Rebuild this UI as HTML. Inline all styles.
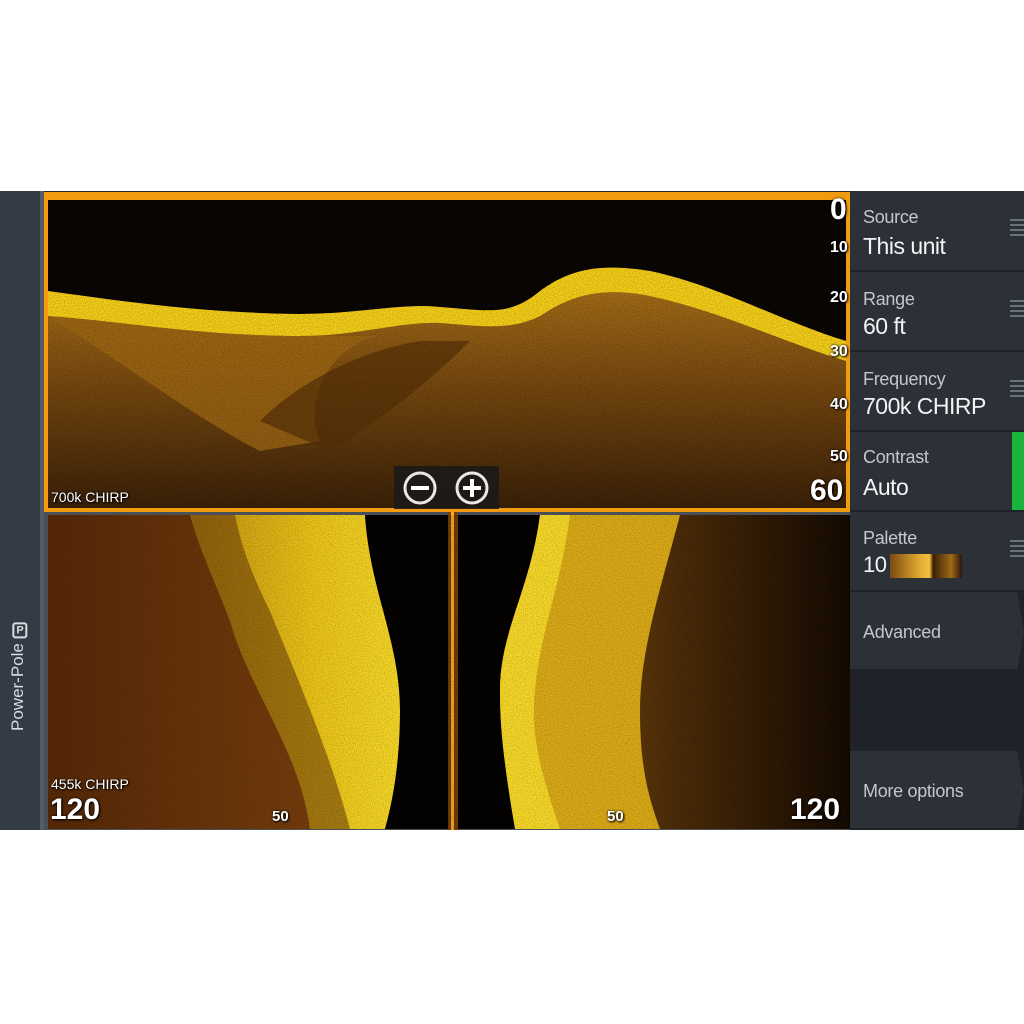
<!DOCTYPE html>
<html><head><meta charset="utf-8"><style>
html,body{margin:0;padding:0;background:#fff;width:1024px;height:1024px;overflow:hidden;font-family:"Liberation Sans","DejaVu Sans",sans-serif}
.scr{position:absolute;left:0;top:191px;width:1024px;height:639px;background:#23272d}
.lb{position:absolute;left:0;top:0;width:40px;height:639px;background:#333b44;border-right:4px solid #525c66}
.pp{position:absolute;left:8px;top:540px;transform:rotate(-90deg);transform-origin:0 0;color:#d8dde2;font-size:17px;white-space:nowrap}
.menu{position:absolute;left:850px;top:0;width:174px;height:639px;background:#1f2329}
.it{position:absolute;left:0;width:174px;background:#2c3138;border-bottom:2px solid #1f2329;box-sizing:border-box}
.l1{position:absolute;left:13px;color:#c2c7cc;font-size:18px;letter-spacing:-0.3px}
.l2{position:absolute;left:13px;color:#f2f4f6;font-size:23px;letter-spacing:-0.5px}
.hb{position:absolute;right:0;width:14px;height:18px;background:repeating-linear-gradient(#6a727b 0 2px,transparent 2px 5px)}
.t{position:absolute;color:#fff;font-weight:bold;text-shadow:0 0 2px #000,1px 1px 2px #000}
</style></head><body>
<div class="scr">
<svg width="1024" height="639" style="position:absolute;left:0;top:0">
<defs>
<filter id="n" x="0" y="0" width="100%" height="100%"><feTurbulence type="fractalNoise" baseFrequency="0.9" numOctaves="2" seed="3"/><feColorMatrix values="0 0 0 0 0  0 0 0 0 0  0 0 0 0 0  0 0 0 -1.4 1"/></filter>
<linearGradient id="bt" x1="0" y1="0" x2="0" y2="1"><stop offset="0" stop-color="#b57a1a"/><stop offset="0.5" stop-color="#7a4a10"/><stop offset="1" stop-color="#3d2208"/></linearGradient>
<linearGradient id="bl" x1="0" y1="0" x2="1" y2="0"><stop offset="0" stop-color="#5a2a08"/><stop offset="1" stop-color="#8a4a10"/></linearGradient>
<linearGradient id="yb" x1="0" y1="0" x2="1" y2="0"><stop offset="0" stop-color="#c99712"/><stop offset="0.6" stop-color="#f4cc1a"/><stop offset="1" stop-color="#ffe02a"/></linearGradient>
<linearGradient id="br" x1="0" y1="0" x2="1" y2="0"><stop offset="0" stop-color="#9a6212"/><stop offset="0.6" stop-color="#4a2a08"/><stop offset="1" stop-color="#150a02"/></linearGradient>
</defs>
<rect x="44" y="1" width="806" height="319" fill="#f29a10"/>
<rect x="48" y="9" width="798" height="308" fill="#0a0603"/>
<path d="M48 100 C120 110 200 122 300 123 C360 123 400 112 440 116 C490 120 510 125 540 100 C570 78 600 72 650 80 C720 95 780 130 846 150 L846 317 L48 317 Z" fill="url(#bt)"/>
<path d="M48 100 C120 110 200 122 300 123 C360 123 400 112 440 116 C490 120 510 125 540 100 C570 78 600 72 650 80 C720 95 780 130 846 150 L846 170 C780 150 720 120 650 105 C600 95 570 105 540 125 C510 140 480 135 440 132 C400 130 360 145 300 145 C200 145 120 130 48 125 Z" fill="#ffd81a"/>
<path d="M48 125 C120 170 200 230 260 260 L320 250 C300 200 340 150 380 145 L300 145 C200 145 120 130 48 125Z" fill="#a56c14" opacity="0.8"/>
<path d="M260 230 C300 190 360 160 420 150 L470 150 C430 190 380 230 330 260Z" fill="#5a3208" opacity="0.7"/>
<rect x="48" y="9" width="798" height="308" filter="url(#n)" opacity="0.35"/>
<rect x="44" y="320" width="404" height="319" fill="#4a5058"/>
<rect x="48" y="324" width="400" height="314" fill="url(#bl)"/>
<path d="M190 324 L365 324 C370 400 400 450 400 520 C400 580 390 620 385 638 L310 638 C300 560 250 500 230 430 C215 390 200 360 190 324Z" fill="url(#yb)"/>
<path d="M190 324 C200 360 215 390 230 430 C250 500 300 560 310 638 L350 638 C330 560 290 470 270 420 C250 380 240 350 235 324Z" fill="#6a3a0a" opacity="0.55"/>
<path d="M365 324 L448 324 L448 638 L385 638 C390 620 400 580 400 520 C400 450 370 400 365 324Z" fill="#050302"/>
<rect x="448" y="320" width="10" height="319" fill="#7a3a0a"/>
<rect x="451" y="320" width="3" height="319" fill="#f0b020"/>
<rect x="458" y="320" width="392" height="319" fill="#4a5058"/>
<rect x="458" y="324" width="392" height="314" fill="url(#br)"/>
<path d="M458 324 L540 324 C530 400 500 440 500 500 C500 560 510 600 520 638 L458 638Z" fill="#050302"/>
<path d="M540 324 L680 324 C660 400 640 460 640 520 C640 580 650 610 660 638 L520 638 C510 600 500 560 500 500 C500 440 530 400 540 324Z" fill="#e2b018"/>
<path d="M540 324 C530 400 500 440 500 500 C500 540 505 580 515 638 L560 638 C540 580 530 540 535 500 C540 440 560 400 570 324Z" fill="#ffe02a"/>
<rect x="48" y="324" width="802" height="314" filter="url(#n)" opacity="0.3"/>
<rect x="394" y="275" width="105" height="44" fill="#1c1a18" opacity="0.9"/>
<circle cx="420" cy="297" r="15" fill="none" stroke="#e8e8e8" stroke-width="3"/>
<rect x="411" y="295" width="18" height="4" fill="#fff"/>
<circle cx="472" cy="297" r="15" fill="none" stroke="#e8e8e8" stroke-width="3"/>
<rect x="463" y="295" width="18" height="4" fill="#fff"/><rect x="470" y="288" width="4" height="18" fill="#fff"/>
<rect x="44" y="318" width="806" height="3" fill="#f29a10"/>
</svg>
<div class="t" style="left:830px;top:2px;font-size:30px">0</div>
<div class="t" style="left:830px;top:48px;font-size:16px">10</div>
<div class="t" style="left:830px;top:98px;font-size:16px">20</div>
<div class="t" style="left:830px;top:152px;font-size:16px">30</div>
<div class="t" style="left:830px;top:205px;font-size:16px">40</div>
<div class="t" style="left:830px;top:257px;font-size:16px">50</div>
<div class="t" style="left:810px;top:283px;font-size:30px">60</div>
<div class="t" style="left:51px;top:298px;font-size:14px;font-weight:normal">700k CHIRP</div>
<div class="t" style="left:51px;top:585px;font-size:14px;font-weight:normal">455k CHIRP</div>
<div class="t" style="left:50px;top:602px;font-size:30px">120</div>
<div class="t" style="left:272px;top:617px;font-size:15px">50</div>
<div class="t" style="left:607px;top:617px;font-size:15px">50</div>
<div class="t" style="left:790px;top:602px;font-size:30px">120</div>
<div class="lb"><div class="pp">Power-Pole <span style="display:inline-block;border:2px solid #d8dde2;border-radius:3px;font-size:11px;font-weight:bold;padding:0 2px;transform:rotate(90deg)">P</span></div></div>
<div class="menu">
<div class="it" style="top:0;height:81px"><div class="l1" style="top:16px">Source</div><div class="l2" style="top:42px">This unit</div><div class="hb" style="top:28px"></div></div>
<div class="it" style="top:81px;height:80px"><div class="l1" style="top:17px">Range</div><div class="l2" style="top:41px">60 ft</div><div class="hb" style="top:28px"></div></div>
<div class="it" style="top:161px;height:80px"><div class="l1" style="top:17px">Frequency</div><div class="l2" style="top:41px">700k CHIRP</div><div class="hb" style="top:28px"></div></div>
<div class="it" style="top:241px;height:80px"><div class="l1" style="top:15px">Contrast</div><div class="l2" style="top:42px">Auto</div><div style="position:absolute;right:0;top:0;width:12px;height:78px;background:#19b43c"></div></div>
<div class="it" style="top:321px;height:80px"><div class="l1" style="top:16px">Palette</div><div class="l2" style="top:40px;font-size:22px">10</div><div style="position:absolute;left:40px;top:42px;width:72px;height:24px;background:linear-gradient(90deg,#7a4a10,#e0a830 40%,#f0c040 55%,#3a2008 60%,#a06a18 85%,#2a1505)"></div><div class="hb" style="top:28px"></div></div>
<div class="it" style="top:401px;height:79px;clip-path:polygon(0 0,96% 0,100% 50%,96% 100%,0 100%)"><div class="l1" style="top:30px">Advanced</div></div>
<div class="it" style="top:560px;height:79px;clip-path:polygon(0 0,96% 0,100% 50%,96% 100%,0 100%)"><div class="l1" style="top:30px">More options</div></div>
</div>
</div>
</body></html>
